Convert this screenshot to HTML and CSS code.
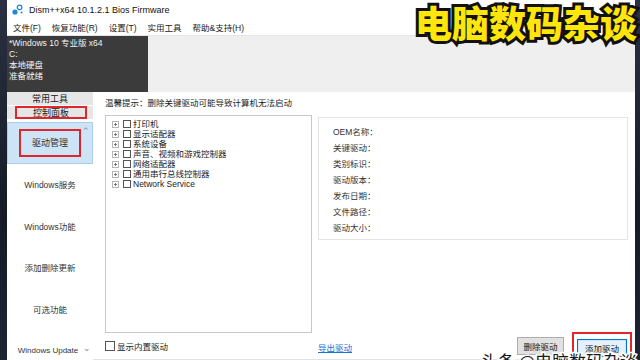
FILE: index.html
```html
<!DOCTYPE html>
<html lang="zh-CN">
<head>
    <meta charset="UTF-8">
    <title>Dism++x64 10.1.2.1 Bios Firmware</title>
    <link rel="stylesheet" href="styles.css">
</head>
<body>
    <div class="dsm-window">
        <div class="dsm-titlebar">
            <svg class="dsm-logo" width="11" height="11" viewBox="0 0 11 11">
                <circle cx="3" cy="8" r="2.6" fill="#1e88d8"/>
                <circle cx="7.6" cy="3.4" r="2.3" fill="none" stroke="#1e88d8" stroke-width="1.3"/>
                <circle cx="9.6" cy="8.6" r="1" fill="#1e88d8"/>
            </svg>
            <span>Dism++x64 10.1.2.1 Bios Firmware</span>
        </div>

        <div class="dsm-menubar">
            <span>文件(F)</span>
            <span>恢复功能(R)</span>
            <span>设置(T)</span>
            <span>实用工具</span>
            <span>帮助&amp;支持(H)</span>
        </div>

        <div class="dsm-session">
            <div class="dsm-session-info">
                <div>*Windows 10 专业版 x64</div>
                <div>C:</div>
                <div>本地硬盘</div>
                <div>准备就绪</div>
            </div>
            <div class="dsm-session-rest"></div>
        </div>

        <div class="dsm-body">
            <div class="dsm-sidebar">
                <div class="dsm-group">常用工具</div>
                <div class="dsm-group"><span class="dsm-red dsm-red-wide">控制面板</span></div>
                <div class="dsm-nav">
                    <div class="dsm-nav-item dsm-active">
                        <span class="dsm-red dsm-red-tall">驱动管理</span>
                        <span class="dsm-arrow">&#8963;</span>
                    </div>
                    <div class="dsm-nav-item">Windows服务</div>
                    <div class="dsm-nav-item">Windows功能</div>
                    <div class="dsm-nav-item">添加删除更新</div>
                    <div class="dsm-nav-item">可选功能</div>
                    <div class="dsm-nav-item dsm-update">Windows Update<span class="dsm-arrow dsm-down">&#8964;</span></div>
                </div>
            </div>

            <div class="dsm-main">
                <div class="dsm-hint">温馨提示：删除关键驱动可能导致计算机无法启动</div>
                <div class="dsm-panels">
                    <div class="dsm-tree">
                        <div class="dsm-node"><i class="dsm-plus"></i><i class="dsm-check"></i>打印机</div>
                        <div class="dsm-node"><i class="dsm-plus"></i><i class="dsm-check"></i>显示适配器</div>
                        <div class="dsm-node"><i class="dsm-plus"></i><i class="dsm-check"></i>系统设备</div>
                        <div class="dsm-node"><i class="dsm-plus"></i><i class="dsm-check"></i>声音、视频和游戏控制器</div>
                        <div class="dsm-node"><i class="dsm-plus"></i><i class="dsm-check"></i>网络适配器</div>
                        <div class="dsm-node"><i class="dsm-plus"></i><i class="dsm-check"></i>通用串行总线控制器</div>
                        <div class="dsm-node"><i class="dsm-plus"></i><i class="dsm-check"></i>Network Service</div>
                    </div>
                    <div class="dsm-details">
                        <div>OEM名称：</div>
                        <div>关键驱动：</div>
                        <div>类别标识：</div>
                        <div>驱动版本：</div>
                        <div>发布日期：</div>
                        <div>文件路径：</div>
                        <div>驱动大小：</div>
                    </div>
                </div>
                <div class="dsm-footer">
                    <label class="dsm-builtin"><i class="dsm-check"></i>显示内置驱动</label>
                    <a class="dsm-link" href="#">导出驱动</a>
                    <button class="dsm-btn">删除驱动</button>
                    <span class="dsm-red dsm-red-btn"><button class="dsm-btn dsm-btn-focus">添加驱动</button></span>
                </div>
            </div>
        </div>
    </div>

    <div class="dsm-banner">电脑数码杂谈</div>
    <div class="dsm-watermark">头条 @电脑数码杂谈</div>
</body>
</html>
```

FILE: styles.css
```css
body {
    margin: 0;
    width: 640px;
    height: 360px;
    overflow: hidden;
    position: relative;
    background: linear-gradient(180deg, #2a3142 0%, #151a26 60%, #1d2433 100%);
    font-family: "Liberation Sans", "Noto Sans CJK SC", sans-serif;
    font-size: 8.5px;
    color: #1a1a1a;
}

.dsm-window {
    margin-left: 7px;
    width: 628px;
    height: 360px;
    background: #fff;
    display: flex;
    flex-direction: column;
}

.dsm-titlebar {
    height: 19px;
    display: flex;
    align-items: center;
    gap: 6px;
    padding-left: 5px;
    font-size: 9px;
    color: #111;
}

.dsm-menubar {
    height: 16px;
    display: flex;
    align-items: center;
    gap: 11px;
    padding-left: 6px;
    border-bottom: 1px solid #e6e6e6;
}

.dsm-session {
    height: 56px;
    display: flex;
}

.dsm-session-info {
    width: 139px;
    background: #3b3b3b;
    color: #f2f2f2;
    padding: 2px 0 0 2px;
    line-height: 11px;
}

.dsm-session-rest {
    flex: 1;
    background: #efefef;
}

.dsm-body {
    flex: 1;
    display: flex;
    min-height: 0;
}

.dsm-sidebar {
    width: 86px;
    display: flex;
    flex-direction: column;
}

.dsm-group {
    height: 13px;
    background: #e6e6e6;
    border-bottom: 1px solid #fff;
    display: flex;
    align-items: center;
    justify-content: center;
    font-size: 9px;
}

.dsm-red {
    border: 2px solid #e0262c;
    box-sizing: border-box;
    display: flex;
    align-items: center;
    justify-content: center;
}

.dsm-red-wide {
    width: 72px;
    height: 13px;
    margin-left: 2px;
}

.dsm-nav {
    margin-top: 2px;
    display: flex;
    flex-direction: column;
}

.dsm-nav-item {
    height: 41.5px;
    display: flex;
    align-items: center;
    justify-content: center;
    position: relative;
    color: #333;
}

.dsm-active {
    justify-content: flex-start;
    padding-left: 12px;
    background: #cde4f7;
    box-shadow: inset 0 0 0 1px #a9cdee;
}

.dsm-red-tall {
    width: 62px;
    height: 28px;
    font-size: 9px;
}

.dsm-arrow {
    position: absolute;
    right: 3px;
    top: 4px;
    color: #888;
    font-size: 9px;
}

.dsm-update {
    font-size: 8px;
    padding-right: 4px;
}

.dsm-down {
    top: 13px;
    right: 2px;
}

.dsm-main {
    flex: 1;
    padding: 4px 7px 0 12px;
    display: flex;
    flex-direction: column;
    border-bottom: 1px solid #e2e2e2;
}

.dsm-hint {
    height: 14px;
    line-height: 14px;
    margin-bottom: 5px;
}

.dsm-panels {
    display: flex;
    gap: 6px;
    align-items: flex-start;
}

.dsm-tree {
    width: 207px;
    height: 218px;
    box-sizing: border-box;
    border: 1px solid #c8c8c8;
    padding: 3px 0 0 6px;
}

.dsm-node {
    height: 10px;
    display: flex;
    align-items: center;
    line-height: 10px;
}

.dsm-plus {
    width: 5px;
    height: 5px;
    border: 1px solid #b5b5b5;
    margin-right: 4px;
    position: relative;
}

.dsm-plus::before,
.dsm-plus::after {
    content: "";
    position: absolute;
    background: #777;
}

.dsm-plus::before {
    left: 1px;
    top: 2px;
    width: 3px;
    height: 1px;
}

.dsm-plus::after {
    left: 2px;
    top: 1px;
    width: 1px;
    height: 3px;
}

.dsm-check {
    width: 6px;
    height: 6px;
    border: 1px solid #555;
    background: #fff;
    margin-right: 2px;
    flex-shrink: 0;
}

.dsm-details {
    flex: 1;
    margin-top: 2px;
    height: 123px;
    box-sizing: border-box;
    border: 1px solid #e4e4e4;
    padding: 6px 0 0 14px;
    line-height: 16px;
    color: #333;
}

.dsm-footer {
    display: flex;
    align-items: center;
    margin-top: 4px;
    height: 18px;
}

.dsm-builtin {
    display: flex;
    align-items: center;
    width: 213px;
}

.dsm-builtin .dsm-check {
    width: 8px;
    height: 8px;
    margin-right: 2px;
}

.dsm-link {
    color: #1a6fd0;
    text-decoration: underline;
    margin-right: auto;
    margin-top: 2px;
}

.dsm-btn {
    font: inherit;
    width: 47px;
    height: 18px;
    padding: 0;
    background: #e1e1e1;
    border: 1px solid #adadad;
    color: #111;
}

.dsm-red-btn {
    width: 60px;
    height: 31px;
    margin: 2px -4px 0 8px;
    padding-top: 5px;
    align-self: flex-start;
    align-items: flex-start;
    transform: translateY(-7px);
}

.dsm-btn-focus {
    width: 50px;
    background: #e5f1fb;
    border-color: #0078d7;
    box-shadow: inset 0 0 0 1px #cce4f7;
}

.dsm-banner {
    position: absolute;
    top: 0;
    right: 3px;
    font-family: "Noto Sans CJK SC", sans-serif;
    font-weight: 900;
    font-size: 37px;
    line-height: 44px;
    color: #ffe60a;
    -webkit-text-stroke: 6px #111;
    paint-order: stroke fill;
}

.dsm-watermark {
    position: absolute;
    top: 351px;
    left: 481px;
    font-family: "Noto Sans CJK SC", sans-serif;
    font-size: 17px;
    line-height: 20px;
    color: #1a1a1a;
    -webkit-text-stroke: 3px #fff;
    paint-order: stroke fill;
    white-space: nowrap;
}
```
